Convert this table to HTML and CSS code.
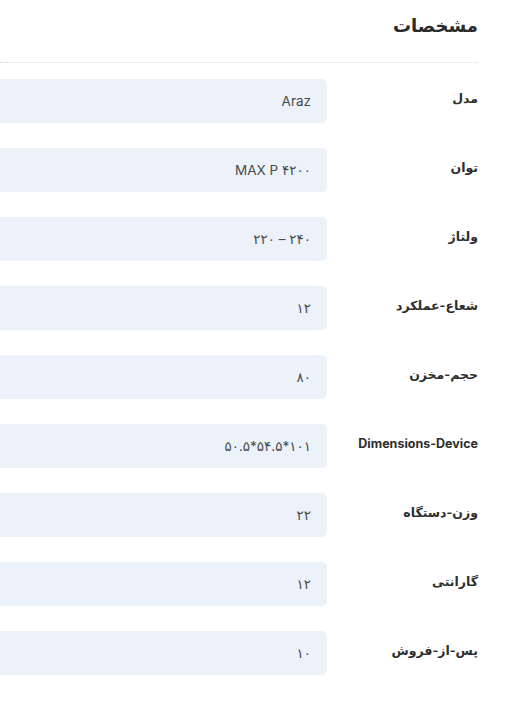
FILE: index.html
```html
<!DOCTYPE html>
<html lang="fa" dir="rtl">
<head>
<meta charset="utf-8">
<title>مشخصات</title>
<link rel="stylesheet" href="styles.css">
</head>
<body>

<div class="specs">
	<h2 class="specs-title">مشخصات</h2>
	<div class="spec-list">
		<div class="spec-row"><div class="spec-label">مدل</div><div class="spec-value"><span dir="ltr">Araz</span></div></div>
		<div class="spec-row"><div class="spec-label">توان</div><div class="spec-value"><span dir="ltr">MAX P ۴۲۰۰</span></div></div>
		<div class="spec-row"><div class="spec-label">ولتاژ</div><div class="spec-value"><span dir="ltr">۲۲۰ – ۲۴۰</span></div></div>
		<div class="spec-row"><div class="spec-label">شعاع-عملکرد</div><div class="spec-value"><span dir="ltr">۱۲</span></div></div>
		<div class="spec-row"><div class="spec-label">حجم-مخزن</div><div class="spec-value"><span dir="ltr">۸۰</span></div></div>
		<div class="spec-row"><div class="spec-label">Dimensions-Device</div><div class="spec-value"><span dir="ltr">۵۰.۵*۵۴.۵*۱۰۱</span></div></div>
		<div class="spec-row"><div class="spec-label">وزن-دستگاه</div><div class="spec-value"><span dir="ltr">۲۲</span></div></div>
		<div class="spec-row"><div class="spec-label">گارانتی</div><div class="spec-value"><span dir="ltr">۱۲</span></div></div>
		<div class="spec-row"><div class="spec-label">پس-از-فروش</div><div class="spec-value"><span dir="ltr">۱۰</span></div></div>
	</div>
</div>

</body>
</html>
```
FILE: styles.css
```css
html, body {
	margin : 0 ;
	padding : 0 ;
	background : #fff ;
	}
body {
	font-family : Inter, "DejaVu Sans", sans-serif ;
	color : #333 ;
	overflow : hidden ;
	}
.specs {
	padding-right : 30px ;
	}
.specs-title {
	margin : 0 ;
	padding : 11px 0 21px 0 ;
	font-size : 18px ;
	line-height : 30px ;
	font-weight : bold ;
	color : #2b2b2b ;
	border-bottom : 1px dotted #d6d6d6 ;
	}
.spec-list {
	display : flex ;
	flex-direction : column ;
	gap : 25px ;
	padding-top : 16px ;
	}
.spec-row {
	display : flex ;
	align-items : flex-start ;
	}
.spec-label {
	width : 151px ;
	flex : none ;
	padding-top : 10px ;
	font-size : 12.5px ;
	line-height : 20px ;
	font-weight : bold ;
	color : #2e2e2e ;
	white-space : nowrap ;
	}
.spec-value {
	flex : 1 ;
	margin-left : -10px ;
	height : 44px ;
	display : flex ;
	align-items : center ;
	padding-right : 16px ;
	background : #ebf2f9 ;
	border-radius : 5px ;
	font-size : 13.5px ;
	color : #4a4a4a ;
	}
```
